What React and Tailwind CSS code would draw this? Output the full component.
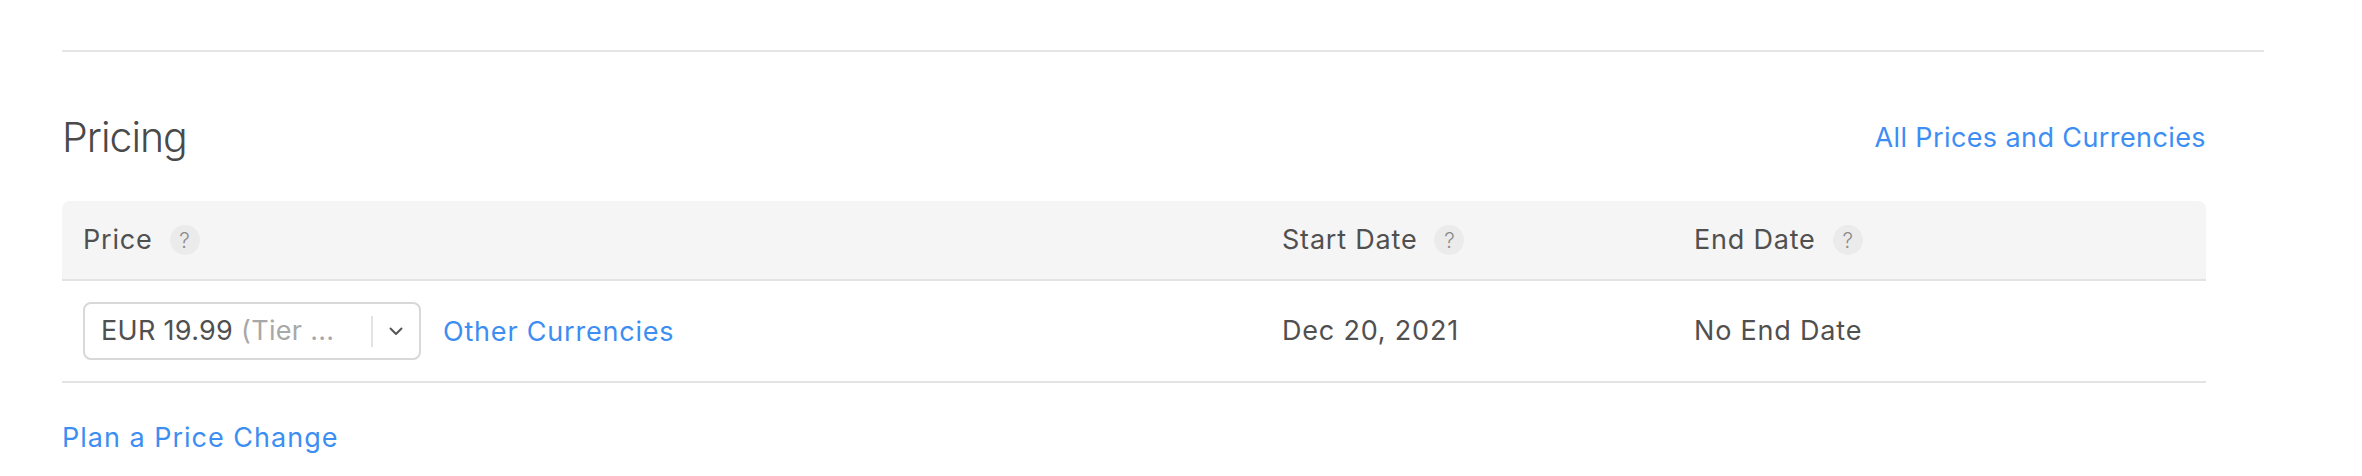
import React from "react";

const Help = () => (
  <span className="ml-[17px] inline-flex h-[30px] w-[30px] items-center justify-center rounded-full bg-[#ebebeb] text-[21px] font-light leading-none tracking-normal text-[#8c8c8c]">
    ?
  </span>
);

const App = () => {
  return (
    <div className="min-h-screen w-full bg-white pt-[50px] font-['Inter','Liberation_Sans',sans-serif] text-[27px] tracking-[0.8px] text-[#505050]">
      <div className="ml-[62px] w-[2202px]">
        {/* divider */}
        <div className="h-[2px] w-full bg-[#e5e5e5]" />

        <div className="w-[2144px]">
          {/* Title row */}
          <div className="mt-[55px] flex h-[60px] items-center justify-between">
            <h2 className="text-[41px] font-light leading-none tracking-[-1px] text-[#4a4a4a]">Pricing</h2>
            <a className="cursor-pointer leading-none tracking-[0.4px] text-[#3d8ef2]">All Prices and Currencies</a>
          </div>

          {/* Table */}
          <div className="mt-[34px]">
            <div className="grid h-[80px] grid-cols-[1199px_412px_1fr] items-center rounded-t-[8px] border-b-2 border-[#e3e3e3] bg-[#f5f5f5]">
              <div className="flex items-center pl-[21px]">
                Price <Help />
              </div>
              <div className="flex items-center pl-[21px]">
                Start Date <Help />
              </div>
              <div className="flex items-center pl-[21px]">
                End Date <Help />
              </div>
            </div>

            <div className="grid h-[102px] grid-cols-[1199px_412px_1fr] items-center border-b-2 border-[#e3e3e3]">
              <div className="flex items-center pl-[21px]">
                <div className="flex h-[58px] w-[338px] items-center rounded-[8px] border-2 border-[#d8d8d8] bg-white">
                  <div className="flex-1 whitespace-nowrap pl-[16px] tracking-[0.3px]">
                    EUR 19.99 <span className="text-[#a8a8a8]">(Tier ...</span>
                  </div>
                  <div className="h-[31px] w-[2px] bg-[#e3e3e3]" />
                  <div className="flex w-[46px] items-center justify-center">
                    <svg width="14" height="9" viewBox="0 0 14 9" fill="none">
                      <path d="M1.5 1.5L7 7L12.5 1.5" stroke="#555" strokeWidth="2" strokeLinecap="round" strokeLinejoin="round" />
                    </svg>
                  </div>
                </div>
                <a className="ml-[22px] mt-[3px] cursor-pointer text-[#3d8ef2]">Other Currencies</a>
              </div>
              <div className="pl-[21px]">Dec 20, 2021</div>
              <div className="pl-[21px]">No End Date</div>
            </div>
          </div>

          {/* Plan link */}
          <div className="mt-[37px] leading-[36px]">
            <a className="cursor-pointer tracking-[1px] text-[#3d8ef2]">Plan a Price Change</a>
          </div>
        </div>
      </div>
    </div>
  );
};

export default App;
